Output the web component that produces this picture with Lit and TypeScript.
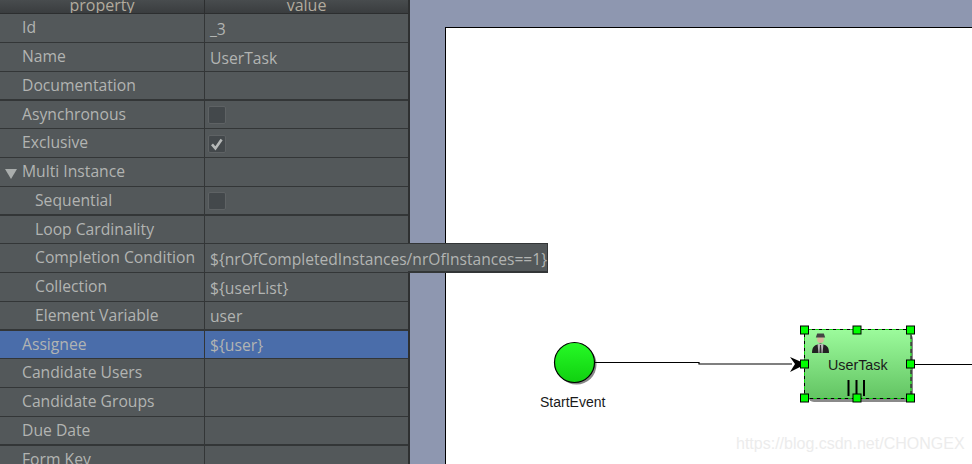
import { LitElement, html, css, svg } from "lit";
import { customElement } from "lit/decorators.js";

type Row = { label: string; value?: string; h: number; thick?: boolean; indent?: boolean; check?: "on" | "off"; arrow?: boolean; selected?: boolean };

const rows: Row[] = [
  { label: "Id", value: "_3", h: 29 },
  { label: "Name", value: "UserTask", h: 29 },
  { label: "Documentation", h: 29, thick: true },
  { label: "Asynchronous", h: 28, check: "off" },
  { label: "Exclusive", h: 29, check: "on" },
  { label: "Multi Instance", h: 29, arrow: true },
  { label: "Sequential", h: 29, thick: true, indent: true, check: "off" },
  { label: "Loop Cardinality", h: 28, indent: true },
  { label: "Completion Condition", value: "${nrOfCompletedInstances/nrOfInstances==1}", h: 29, indent: true },
  { label: "Collection", value: "${userList}", h: 29, indent: true },
  { label: "Element Variable", value: "user", h: 29, thick: true, indent: true },
  { label: "Assignee", value: "${user}", h: 28, selected: true },
  { label: "Candidate Users", h: 29 },
  { label: "Candidate Groups", h: 29 },
  { label: "Due Date", h: 29, thick: true },
  { label: "Form Key", h: 29 },
];

const handles = [
  [804.5, 330], [857, 330], [910.5, 330],
  [804.5, 364], [910.5, 364],
  [804.5, 398], [857, 398], [910.5, 398],
];

@customElement("app-root")
export class AppRoot extends LitElement {
  static styles = css`
    :host { display: flex; width: 972px; height: 464px; overflow: hidden; position: relative; background: #8e97b0;
      font-family: "Open Sans", "Noto Sans", sans-serif; font-size: 15.7px; color: #b2b4b2; }
    .panel { width: 408px; flex: none; height: 464px; overflow: hidden; background: #53585a; border-right: 2px solid #2e3031; }
    .head { display: grid; grid-template-columns: 204px 1fr; height: 14px; box-sizing: border-box;
      background: linear-gradient(#484c4e, #3a3d3f); border-bottom: 1px solid #2c2e2f; line-height: 10px; text-align: center; overflow: hidden; color: #b2ab9e; font-size: 16px; }
    .head div { height: 13px; }
    .head div + div { border-left: 1px solid #2c2e2f; }
    .row { display: grid; grid-template-columns: 204px 1fr; box-sizing: border-box; border-bottom: 1px solid #333637; }
    .row.thick { border-bottom: 2px solid #333637; }
    .row.selected { background: #4a6daa; }
    .cell { display: flex; align-items: center; min-width: 0; white-space: nowrap; }
    .name { padding-left: 22px; padding-bottom: 2px; box-sizing: border-box; position: relative; }
    .name.indent { padding-left: 35px; }
    .value { border-left: 1px solid #333637; padding-left: 5px; padding-top: 1px; box-sizing: border-box; }
    .arrow { position: absolute; left: 5px; top: 11px; width: 0; height: 0; border-left: 6px solid transparent; border-right: 6px solid transparent; border-top: 10px solid #a9adac; }
    .box { width: 18px; height: 18px; margin-left: -2px; box-sizing: border-box; background: #43484b; border: 1px solid #5e6264; border-radius: 2px; display: flex; align-items: center; justify-content: center; }
    .box svg { display: block; }
    .tip { position: absolute; left: 408px; top: 243px; width: 140px; height: 30px; box-sizing: border-box; background: #53585a; border: 1px solid #333637; border-left: none; border-bottom-width: 2px; }
    .tiptext { position: absolute; left: 210px; top: 243px; height: 29px; line-height: 33px; white-space: nowrap; font-size: 15.6px; }
    .canvas { flex: 1; padding: 27px 0 0 35px; min-width: 0; position: relative; }
    .sheet { height: 500px; background: #fff; border: 1px solid #000; border-right: none; }
    .stage { position: absolute; left: 0; top: 0; }
    .mark { position: absolute; left: 736px; top: 435px; font-family: "Liberation Sans", sans-serif; font-size: 16px; color: #ececec; white-space: nowrap; }
    svg text { font-family: "Liberation Sans", sans-serif; fill: #1a1a1a; }
    .t-task { font-size: 14.3px; }
    .t-event { font-size: 14px; }
  `;

  private renderCheck(kind: "on" | "off") {
    return html`<div class="box">${kind === "on"
      ? html`<svg width="16" height="16" viewBox="0 0 16 16"><path d="M3 8.4 L6.4 12.4 L12.6 3.4" fill="none" stroke="#b6b9b8" stroke-width="2.6"/></svg>`
      : ""}</div>`;
  }

  private renderRow(r: Row) {
    const cls = `row ${r.thick ? "thick" : ""} ${r.selected ? "selected" : ""}`;
    return html`<div class=${cls} style="height:${r.h}px">
      <div class="cell name ${r.indent ? "indent" : ""}">${r.arrow ? html`<span class="arrow"></span>` : ""}${r.label}</div>
      <div class="cell value">${r.check ? this.renderCheck(r.check) : r.label === "Completion Condition" ? "" : r.value ?? ""}</div>
    </div>`;
  }

  private diagram() {
    return svg`
      <defs>
        <linearGradient id="task" x1="0" y1="0" x2="0" y2="1"><stop offset="0" stop-color="#9cfb9c"/><stop offset="1" stop-color="#63c463"/></linearGradient>
        <linearGradient id="ev" x1="0" y1="0" x2="0" y2="1"><stop offset="0" stop-color="#26fa26"/><stop offset="1" stop-color="#10d010"/></linearGradient>
      </defs>
      <circle cx="576.5" cy="364.5" r="20" fill="#888"/>
      <circle cx="574.5" cy="362.5" r="20" fill="url(#ev)" stroke="#000" stroke-width="1.2"/>
      <text class="t-event" x="540" y="407">StartEvent</text>
      <path d="M595 362.5 H699 V364 H792" fill="none" stroke="#000" stroke-width="1.2"/>
      <path d="M790 357 L806 364 L790 372 L795 364 Z" fill="#000"/>
      <path d="M912 364.5 H972" stroke="#000" stroke-width="1.2"/>
      <rect x="808" y="333" width="105" height="69" rx="6" fill="#8a8a8a"/>
      <rect x="804.5" y="329.5" width="106.5" height="69" rx="6" fill="url(#task)"/>
      <rect x="804.5" y="329.5" width="106.5" height="69" fill="none" stroke="#000" stroke-dasharray="4 3"/>
      <rect x="804.5" y="329.5" width="106.5" height="69" fill="none" stroke="#00e000" stroke-dasharray="3 4" stroke-dashoffset="-4"/>
      <text class="t-task" x="828" y="370">UserTask</text>
      <g>
        <path d="M812 353 C812 346 815 345 820.5 343.5 C826 345 829 346 829 353 Z" fill="#222"/>
        <path d="M817.5 344 L818.5 353 H822.5 L823.5 344 Z" fill="#b9b9b9"/>
        <path d="M820 345 h1 l.6 8 h-2.2 Z" fill="#333"/>
        <circle cx="820.5" cy="339.5" r="3.4" fill="#d7b69d"/>
        <path d="M815.8 337.5 H825.2 L823.8 333.6 H817.2 Z" fill="#444"/>
      </g>
      <path d="M848.5 380 V396 M856.5 380 V396 M864 380 V396" stroke="#000" stroke-width="2"/>
      ${handles.map(([x, y]) => svg`<rect x=${x - 4} y=${y - 4} width="8" height="8" fill="#00ff00" stroke="#000"/>`)}
    `;
  }

  render() {
    return html`
      <div class="panel">
        <div class="head"><div>property</div><div>value</div></div>
        ${rows.map((r) => this.renderRow(r))}
      </div>
      <div class="canvas"><div class="sheet"></div></div>
      <svg class="stage" width="972" height="464" viewBox="0 0 972 464">${this.diagram()}</svg>
      <div class="tip"></div>
      <div class="tiptext">\${nrOfCompletedInstances/nrOfInstances==1}</div>
      <div class="mark">https://blog.csdn.net/CHONGEX</div>
    `;
  }
}
